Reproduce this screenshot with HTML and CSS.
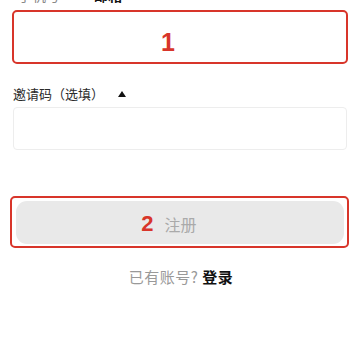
FILE: index.html
```html
<!DOCTYPE html>
<html lang="zh">
<head>
<meta charset="utf-8">
<link rel="stylesheet" href="styles.css">
</head>
<body>
<div class="page">
  <div class="tabs">
    <span class="tab">手机号</span>
    <span class="tab active">邮箱</span>
  </div>
  <div class="mark mark-1"><span class="num">1</span></div>
  <div class="label">邀请码（选填）<span class="tri"></span></div>
  <div class="input"></div>
  <div class="mark mark-2">
    <div class="btn"><span class="num num-2">2</span><span class="btn-text">注册</span></div>
  </div>
  <div class="login">已有账号? <b>登录</b></div>
</div>
</body>
</html>
```
FILE: styles.css
```css
html, body {
  margin: 0;
  padding: 0;
  background: #fff;
}
body {
  font-family: "Noto Sans CJK SC", "Noto Sans", sans-serif;
  color: #222;
  width: 360px;
  height: 360px;
  overflow: hidden;
}
.page {
  display: flex;
  flex-direction: column;
}
.tabs {
  display: flex;
  gap: 34px;
  margin-top: -15px;
  padding-left: 18px;
  height: 20px;
  font-size: 14px;
  line-height: 20px;
}
.tab {
  color: #888;
}
.tab.active {
  color: #111;
  font-weight: 700;
}
.mark {
  border: 2px solid #d8352a;
  border-radius: 5px;
  box-sizing: border-box;
}
.mark-1 {
  margin: 5px 12px 0 12px;
  height: 54px;
  display: flex;
  justify-content: center;
  align-items: center;
  padding-top: 10px;
  padding-right: 24px;
}
.num {
  color: #d8352a;
  font-family: "Liberation Sans", Arial, sans-serif;
  font-weight: 700;
  font-size: 25px;
  line-height: 1;
}
.label {
  margin: 20px 0 0 13px;
  font-size: 13px;
  line-height: 20px;
  color: #2a2a2a;
  display: flex;
  align-items: center;
}
.tri {
  margin-left: 14px;
  width: 0;
  height: 0;
  border-left: 4.5px solid transparent;
  border-right: 4.5px solid transparent;
  border-bottom: 6px solid #111;
}
.input {
  margin: 3px 13px 0 13px;
  height: 43px;
  border: 1px solid #ededed;
  border-radius: 4px;
  box-sizing: border-box;
}
.mark-2 {
  margin: 46px 11px 0 10px;
  height: 52px;
  padding: 3px 3px 2px 4px;
}
.btn {
  height: 100%;
  background: #e9e9e9;
  border-radius: 11px;
  display: flex;
  justify-content: center;
  align-items: center;
  gap: 11px;
  padding-top: 2px;
  padding-right: 22px;
  box-sizing: border-box;
}
.num-2 {
  font-size: 22px;
}
.btn-text {
  color: #aaa;
  font-size: 16px;
  line-height: 20px;
}
.login {
  margin-top: 19px;
  text-align: center;
  font-size: 15px;
  line-height: 20px;
  color: #999;
  letter-spacing: 0.5px;
  padding-left: 2px;
}
.login b {
  color: #111;
  font-weight: 700;
}
```
